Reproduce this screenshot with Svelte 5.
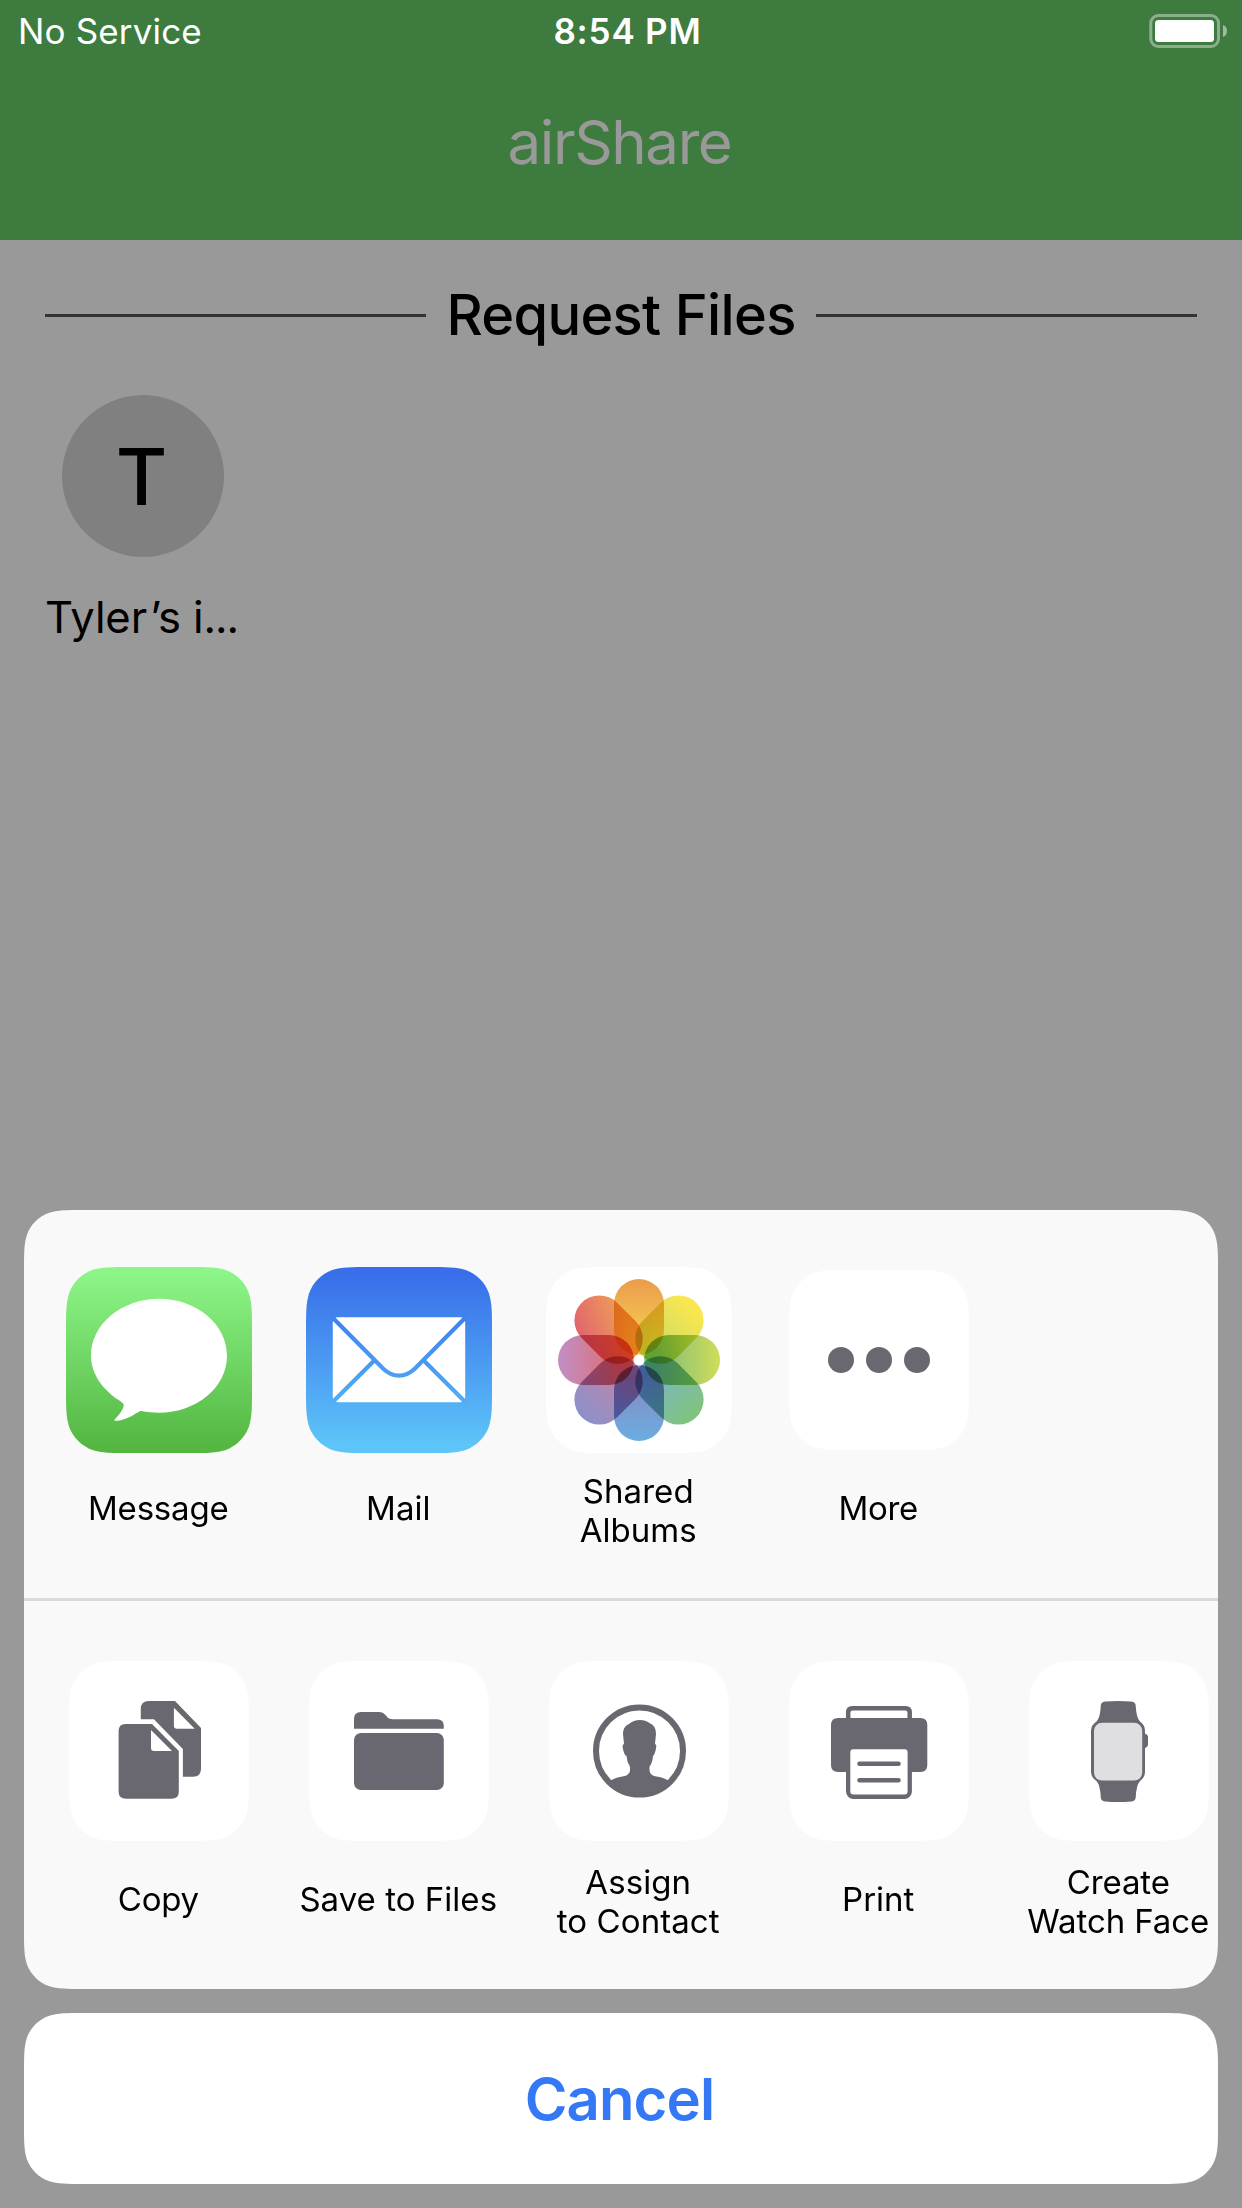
<script lang="ts">
  type Item = { icon: string; lines: string[]; spacing: number };

  const apps: Item[] = [
    { icon: 'message', lines: ['Message'], spacing: -0.2 },
    { icon: 'mail', lines: ['Mail'], spacing: 0 },
    { icon: 'photos', lines: ['Shared', 'Albums'], spacing: 0.05 },
    { icon: 'more', lines: ['More'], spacing: -0.32 },
  ];

  const actions: Item[] = [
    { icon: 'copy', lines: ['Copy'], spacing: -0.3 },
    { icon: 'folder', lines: ['Save to Files'], spacing: 0.03 },
    { icon: 'contact', lines: ['Assign', 'to Contact'], spacing: 0.08 },
    { icon: 'print', lines: ['Print'], spacing: 0 },
    { icon: 'watch', lines: ['Create', 'Watch Face'], spacing: -0.1 },
  ];

  const petals = [
    { angle: 0, outer: '#eb9f4d', inner: '#f6d052' },
    { angle: 45, outer: '#fbe74d', inner: '#c9da6a' },
    { angle: 90, outer: '#cbdb5b', inner: '#7dbb7c' },
    { angle: 135, outer: '#80c37f', inner: '#7cb4cc' },
    { angle: 180, outer: '#6cacdf', inner: '#8a86c0' },
    { angle: 225, outer: '#8f90c8', inner: '#c285a4' },
    { angle: 270, outer: '#c38dc2', inner: '#e06a66' },
    { angle: 315, outer: '#e2636f', inner: '#ed9f58', slanted: true },
  ];

  // Rounded rectangle with continuous corners of radius r.
  function squircle(w: number, h: number, r: number, x = 0, y = 0): string {
    const k = [1.52866, 1.08849, 0.86841, 0.63149, 0.37282, 0.16906, 0.07491].map((v) => v * r);
    const [a, b, c, d, e, f, g] = k;
    const X = x + w;
    const Y = y + h;
    return [
      `M${x + a} ${y}L${X - a} ${y}`,
      `C${X - b} ${y} ${X - c} ${y} ${X - d} ${y + g}C${X - e} ${y + f} ${X - f} ${y + e} ${X - g} ${y + d}`,
      `C${X} ${y + c} ${X} ${y + b} ${X} ${y + a}L${X} ${Y - a}`,
      `C${X} ${Y - b} ${X} ${Y - c} ${X - g} ${Y - d}C${X - f} ${Y - e} ${X - e} ${Y - f} ${X - d} ${Y - g}`,
      `C${X - c} ${Y} ${X - b} ${Y} ${X - a} ${Y}L${x + a} ${Y}`,
      `C${x + b} ${Y} ${x + c} ${Y} ${x + d} ${Y - g}C${x + e} ${Y - f} ${x + f} ${Y - e} ${x + g} ${Y - d}`,
      `C${x} ${Y - c} ${x} ${Y - b} ${x} ${Y - a}L${x} ${y + a}`,
      `C${x} ${y + b} ${x} ${y + c} ${x + g} ${y + d}C${x + f} ${y + e} ${x + e} ${y + f} ${x + d} ${y + g}`,
      `C${x + c} ${y} ${x + b} ${y} ${x + a} ${y}Z`,
    ].join('');
  }

  const large = squircle(186, 186, 41.5);
  const small = squircle(180, 180, 40);
  const sheetClip = `path("${squircle(1194, 779, 39)}")`;
  const cancelClip = `path("${squircle(1194, 171, 39)}")`;
</script>

{#snippet art(icon: string)}
  {#if icon === 'message'}
    <svg width="186" height="186" viewBox="0 0 186 186">
      <defs>
        <linearGradient id="green" x1="0" y1="0" x2="0" y2="1">
          <stop offset="0.04" stop-color="#8cf587" />
          <stop offset="0.96" stop-color="#54b742" />
        </linearGradient>
      </defs>
      <path d={large} fill="url(#green)" />
      <path
        fill="#fff"
        d="M93 31.7C130.6 31.7 161 57.2 161 88.7S130.6 145.7 93 145.7C86.500 145.700 80.500 145.200 75.500 144C72.500 143.300 68 149.300 58 152.200C54 153.500 51 153.900 49.300 153.800C48 153.700 48 152.900 49 152C54 147.500 57.500 141 57.800 138.500C58 136.500 55.500 135 53 133.300C36 122 25 106.300 25 88.700C25 57.200 55.400 31.700 93 31.700Z"
      />
    </svg>
  {:else if icon === 'mail'}
    <svg width="186" height="186" viewBox="0 0 186 186">
      <defs>
        <linearGradient id="blue" x1="0" y1="0" x2="0" y2="1">
          <stop offset="0.04" stop-color="#386eea" />
          <stop offset="0.96" stop-color="#5dc5f8" />
        </linearGradient>
        <linearGradient id="fold" gradientUnits="userSpaceOnUse" x1="0" y1="50" x2="0" y2="135">
          <stop offset="0" stop-color="#4081ed" />
          <stop offset="1" stop-color="#52adf3" />
        </linearGradient>
      </defs>
      <path d={large} fill="url(#blue)" />
      <rect x="26.800" y="50.300" width="132.400" height="85" rx="5" fill="#fff" />
      <path
        fill="none"
        stroke="url(#fold)"
        stroke-width="4.200"
        d="M25 49L77 101.500C87 111.100 99 111.100 109 101.500L161 49M25 136.700L68.500 93.200M161 136.700L117.500 93.200"
      />
    </svg>
  {:else if icon === 'photos'}
    <svg width="186" height="186" viewBox="0 0 186 186">
      <defs>
        {#each petals as p}
          <linearGradient id="petal-{p.angle}" x1="0" y1={p.slanted ? 0.1 : 0} x2={p.slanted ? 1 : 0} y2={p.slanted ? 0.76 : 1}>
            <stop offset="0.05" stop-color={p.outer} />
            <stop offset="0.85" stop-color={p.inner} />
          </linearGradient>
        {/each}
      </defs>
      <path d={large} fill="#fff" />
      {#each petals as p}
        <rect
          class="petal"
          x="68"
          y="12"
          width="50"
          height="76"
          rx="25"
          fill="url(#petal-{p.angle})"
          transform="rotate({p.angle} 93 93)"
        />
      {/each}
      <circle cx="93" cy="93" r="5.500" fill="#fff" />
    </svg>
  {:else}
    <svg class="glyph" width="180" height="180" viewBox="0 0 180 180">
      <path d={small} fill="#fff" />
      {#if icon === 'more'}
        <circle cx="52" cy="90" r="13" />
        <circle cx="90" cy="90" r="13" />
        <circle cx="128" cy="90" r="13" />
      {:else if icon === 'copy'}
        <path
          fill-rule="evenodd"
          d="M71.800 58.300V48Q71.800 40 79.800 40H106L132 67V107.700Q132 115.700 124 115.700H113.900V88L84.900 58.300ZM104.900 46.700V64.700Q104.900 67.700 107.900 67.700H125.700Z"
        />
        <path
          fill-rule="evenodd"
          d="M49.600 70Q49.600 63 56.600 63H83L109.800 90V130.500Q109.800 137.800 102.500 137.800H57Q49.600 137.800 49.600 130.500ZM82 69V87Q82 90 85 90H103Z"
        />
      {:else if icon === 'folder'}
        <path d="M45 67.700V58Q45 51 52 51H70.500Q74 51 76.500 54L78.500 56.500Q80.300 58.300 83.500 58.300H128Q134.800 58.300 134.800 65V67.700Z" />
        <rect x="45" y="72" width="89.800" height="57" rx="7" />
      {:else if icon === 'contact'}
        <circle class="outline" cx="90.500" cy="90" r="43.500" stroke-width="6" />
        <path
          d="M91 59Q96.500 59 100.500 62Q107 64.500 107 73L106 83Q108 83.500 107 87Q106 93.500 104 95Q103.500 102 100.500 105.500V109.500Q101 113.500 105 115Q114 116.300 119.500 119.500L122 122A45 45 0 0 1 59 122L61.500 119.500Q67 116.300 76 115Q80 113.500 81 110V105.500Q77.800 101 77.500 95Q75.200 94.500 73.800 87Q73 83.500 75 83L74 73Q74 65.500 80 63Q84.500 59 91 59Z"
        />
      {:else if icon === 'print'}
        <path d="M42 64Q42 57 49 57H131.500Q138.300 57 138.300 64V104Q138.300 111 131.500 111H49Q42 111 42 104Z" />
        <path class="outline" d="M59.200 58V51.500Q59.200 47.300 63.400 47.300H116.500Q120.700 47.300 120.700 51.500V58" stroke-width="4.500" />
        <rect x="57" y="84" width="65.900" height="54" rx="7.500" />
        <rect x="61.300" y="88.300" width="57.300" height="45.300" rx="3" fill="#fff" />
        <path class="outline" d="M70.500 102.700H109.500M70.500 119.300H109.500" stroke-width="4.600" stroke-linecap="round" />
      {:else if icon === 'watch'}
        <path d="M76 40.500Q89 39.300 102.500 40.500Q106.500 41 106.700 44.500Q107.300 57 111 60.500Q116 64 116 70V110.500Q116 116.500 111 120Q107.300 124 106.700 136.500Q106.500 140 102.500 140.500Q89 141.500 76 140.500Q72 140 71.800 136.500Q71.200 124 67.500 120Q62 116.500 62 110.500V70Q62 64 67.500 60.500Q71.200 57 71.800 44.500Q72 41 76 40.500Z" />
        <path d="M115 72.300Q119 73.500 119 76V83.500Q119 86 115 87.500Z" />
        <rect x="65" y="61.800" width="48.200" height="57.800" rx="8" fill="#dfdfe2" />
      {/if}
    </svg>
  {/if}
{/snippet}

{#snippet row(items: Item[])}
  <div class="row">
    {#each items as item}
      <div class="item">
        <div class="slot">{@render art(item.icon)}</div>
        <div class="label" class:double={item.lines.length > 1} style:letter-spacing="{item.spacing}px">
          {#each item.lines as line}<span>{line}</span>{/each}
        </div>
      </div>
    {/each}
  </div>
{/snippet}

<div class="screen">
  <header>
    <div class="status">
      <span class="carrier">No Service</span>
      <span class="time">8:54 PM</span>
      <span class="battery">
        <svg width="78" height="34" viewBox="0 0 78 34">
          <rect x="1.800" y="1.500" width="67.700" height="31" rx="7.500" fill="none" stroke="#fff" stroke-opacity="0.4" stroke-width="3" />
          <rect x="6" y="6" width="59" height="22" rx="3.500" fill="#fff" />
          <path d="M74 11Q78 12.500 78 17T74 23Z" fill="#fff" fill-opacity="0.5" />
        </svg>
      </span>
    </div>
    <h1>airShare</h1>
  </header>

  <main>
    <h2>Request Files</h2>
    <div class="peer">
      <div class="avatar">T</div>
      <div class="name">Tyle<span class="loose">r</span>’s i<span class="dots">...</span></div>
    </div>
  </main>

  <section class="sheet" style:clip-path={sheetClip}>
    {@render row(apps)}
    <div class="divider"></div>
    {@render row(actions)}
  </section>
  <button class="cancel" style:clip-path={cancelClip}>Cancel</button>
</div>

<style>
  :global(body) {
    background: #999;
  }

  .screen {
    box-sizing: border-box;
    display: flex;
    flex-direction: column;
    width: 1242px;
    height: 2208px;
    overflow: hidden;
    background: #999;
    color: #000;
    font-family: Inter, 'Liberation Sans', sans-serif;
  }

  svg {
    display: block;
  }

  header {
    height: 240px;
    flex: none;
    background: #3e7b3f;
  }

  .status {
    display: grid;
    grid-template-columns: 1fr auto 1fr;
    align-items: center;
    height: 62px;
    padding: 0 15px 0 18px;
    color: #fff;
    font-size: 35px;
    line-height: 42px;
  }

  .carrier {
    letter-spacing: 0.15px;
  }

  .time {
    padding-left: 10px;
    font-weight: 600;
    letter-spacing: 0.8px;
  }

  .battery {
    justify-self: end;
  }

  h1 {
    margin: 0;
    padding-right: 3px;
    color: #999;
    font-size: 60px;
    font-weight: 400;
    letter-spacing: -1.4px;
    line-height: 161px;
    text-align: center;
  }

  main {
    flex: 1;
    padding: 41px 45px 0;
  }

  h2 {
    display: flex;
    align-items: center;
    gap: 20.5px;
    margin: 0;
    font-size: 56px;
    font-weight: 500;
    letter-spacing: -0.68px;
    line-height: 69px;
  }

  h2::before,
  h2::after {
    content: '';
    flex: 1;
    height: 3px;
    background: #333;
  }

  .peer {
    display: flex;
    flex-direction: column;
    width: 196px;
    margin-top: 45px;
  }

  .avatar {
    box-sizing: border-box;
    display: grid;
    place-items: center;
    align-self: center;
    width: 162px;
    height: 162px;
    padding-right: 3px;
    border-radius: 50%;
    background: #808080;
    font-size: 79px;
    font-weight: 500;
  }

  .name {
    margin-top: 35px;
    font-size: 43.6px;
    letter-spacing: -0.11px;
    line-height: 52px;
    white-space: nowrap;
  }

  .loose {
    letter-spacing: 3px;
  }

  .dots {
    letter-spacing: -1.1px;
  }

  .sheet {
    box-sizing: border-box;
    flex: none;
    height: 779px;
    margin: 0 24px;
    background: #f9f9f9;
  }

  .row {
    display: flex;
    box-sizing: border-box;
    height: 388px;
    padding: 57px 0 0 15px;
  }

  .item {
    display: flex;
    flex: none;
    flex-direction: column;
    align-items: center;
    gap: 16.5px;
    width: 240px;
  }

  .slot {
    display: grid;
    place-items: center;
    width: 186px;
    height: 186px;
  }

  .label {
    box-sizing: border-box;
    display: flex;
    flex-direction: column;
    align-items: center;
    justify-content: center;
    height: 78px;
    padding-right: 1.5px;
    font-size: 33px;
    line-height: 39px;
    white-space: nowrap;
  }

  .double {
    height: 80px;
    padding-top: 2px;
  }

  .divider {
    height: 3px;
    background: #d9d9de;
  }

  .petal {
    mix-blend-mode: multiply;
  }

  .glyph {
    fill: #696870;
  }

  .outline {
    fill: none;
    stroke: #696870;
  }

  .cancel {
    flex: none;
    height: 171px;
    margin: 24px;
    padding: 0 3px 0 0;
    border: 0;
    background: #fff;
    color: #3478f6;
    font-family: inherit;
    font-size: 58px;
    font-weight: 600;
    letter-spacing: -0.86px;
  }
</style>
